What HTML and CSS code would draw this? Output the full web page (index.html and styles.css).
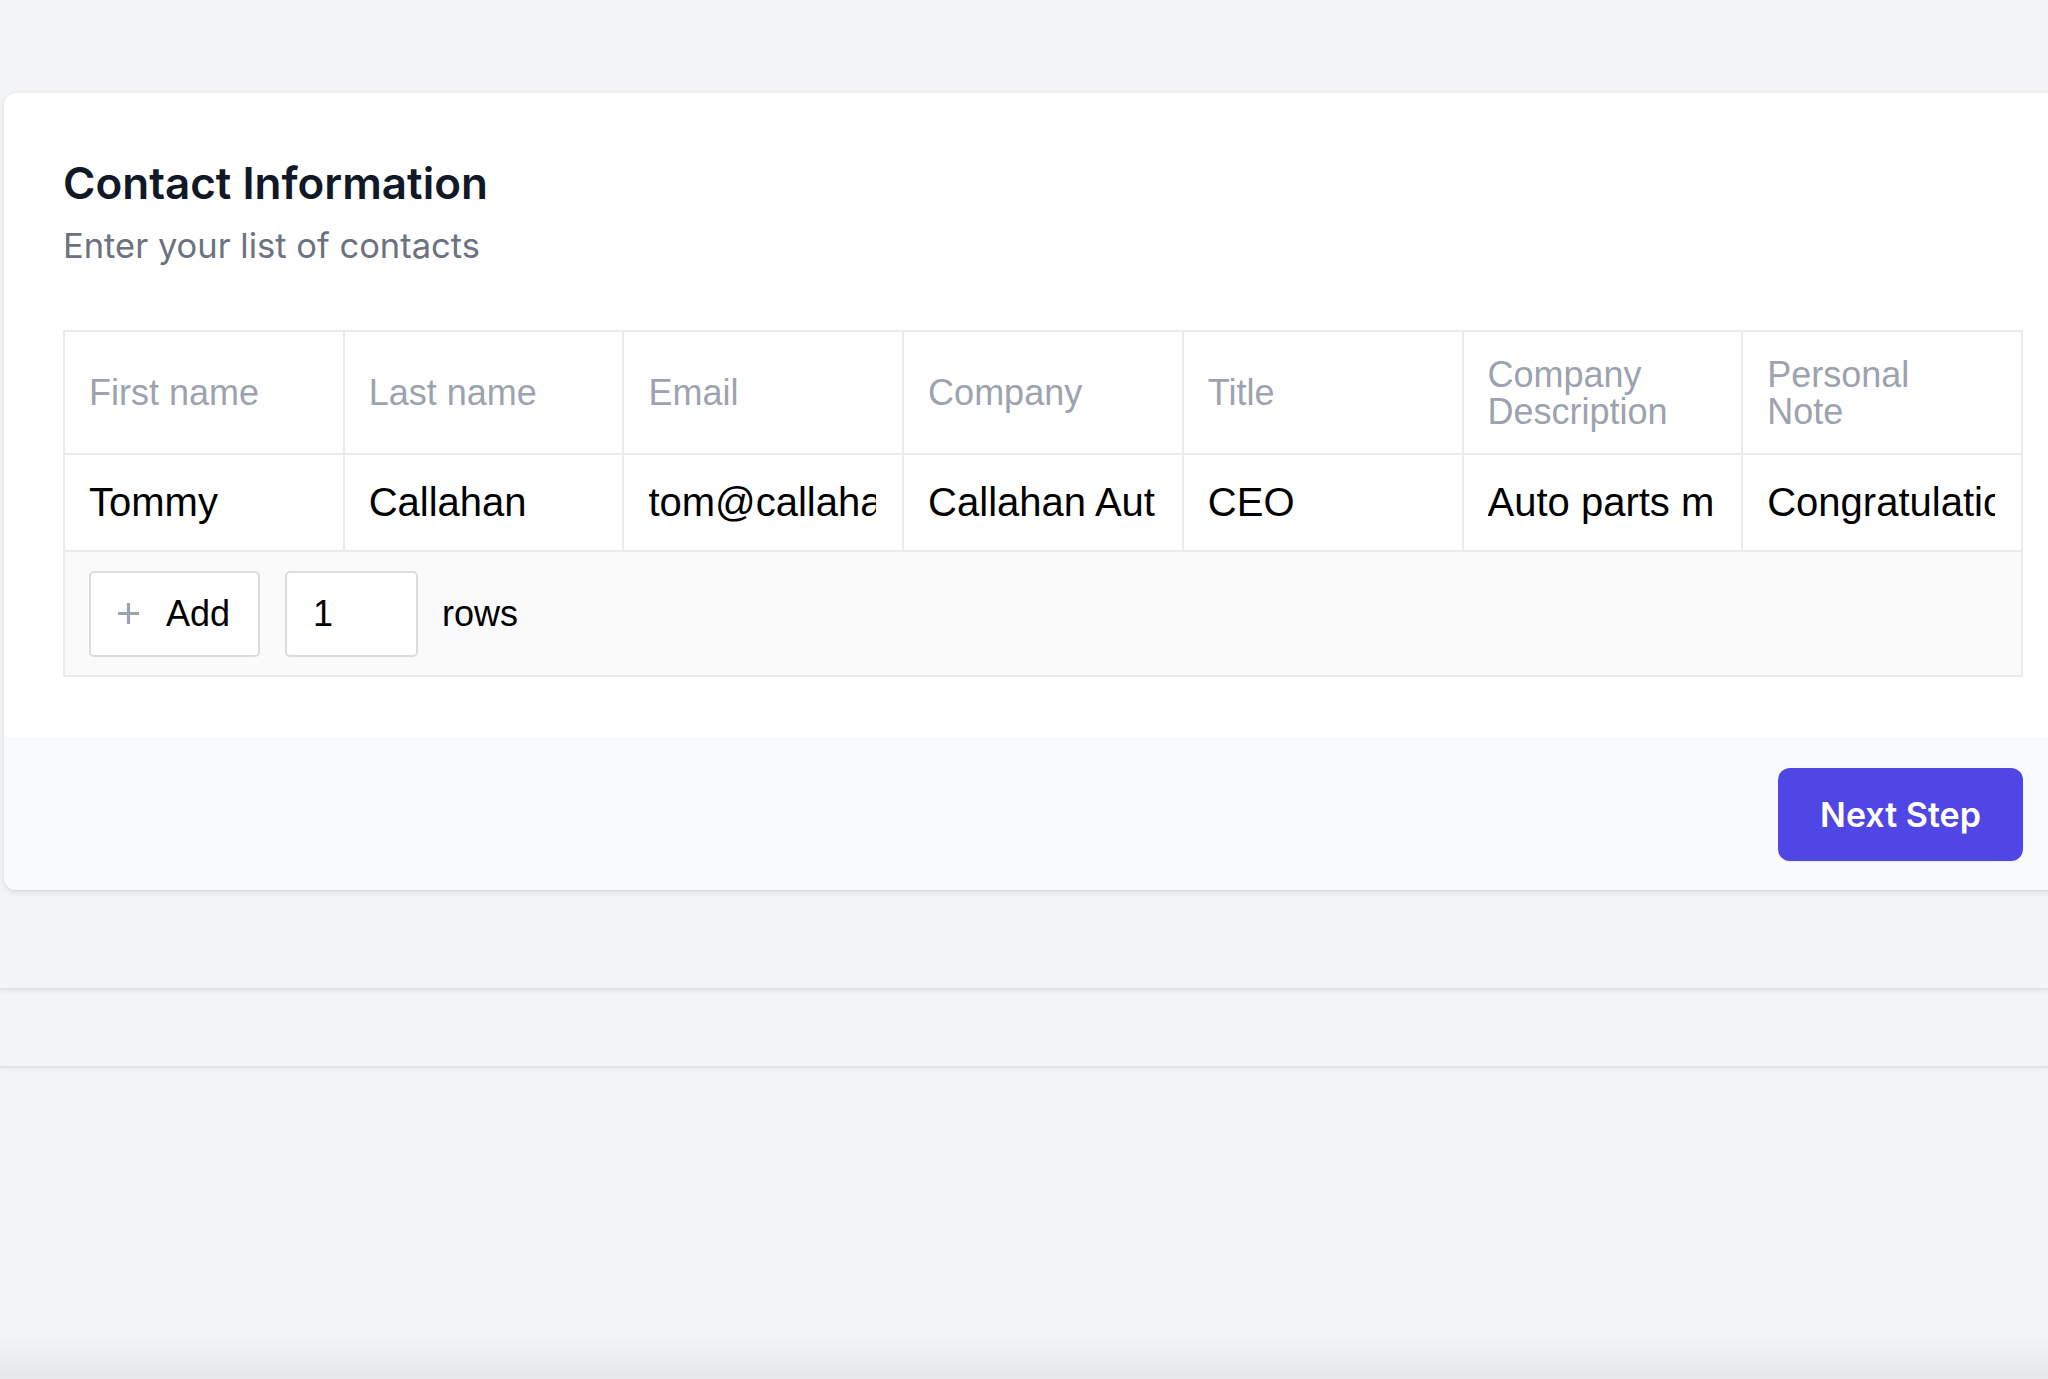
FILE: index.html
```html
<!DOCTYPE html>
<html lang="en">
<head>
    <meta charset="UTF-8">
    <meta name="viewport" content="width=device-width, initial-scale=1.0">
    <title>Contact Information</title>
    <link rel="stylesheet" href="styles.css">
</head>
<body>
    <div class="card">
        <div class="card-body">
            <h2 class="title">Contact Information</h2>
            <p class="subtitle">Enter your list of contacts</p>
            <table class="contacts">
                <thead>
                    <tr>
                        <th>First name</th>
                        <th>Last name</th>
                        <th>Email</th>
                        <th>Company</th>
                        <th>Title</th>
                        <th>Company Description</th>
                        <th>Personal Note</th>
                    </tr>
                </thead>
                <tbody>
                    <tr>
                        <td><input type="text" value="Tommy"></td>
                        <td><input type="text" value="Callahan"></td>
                        <td><input type="text" value="tom@callahanauto.com"></td>
                        <td><input type="text" value="Callahan Auto"></td>
                        <td><input type="text" value="CEO"></td>
                        <td><input type="text" value="Auto parts manufacturer"></td>
                        <td><input type="text" value="Congratulations on the new plant"></td>
                    </tr>
                </tbody>
                <tfoot>
                    <tr>
                        <td colspan="7">
                            <div class="add-row">
                                <button class="add-btn">
                                    <svg width="25" height="25" viewBox="0 0 25 25"><path d="M12.5 2v21M2 12.5h21" stroke="#9ca3af" stroke-width="3.2" fill="none"/></svg>
                                    Add
                                </button>
                                <input type="text" class="count" value="1">
                                <span class="rows">rows</span>
                            </div>
                        </td>
                    </tr>
                </tfoot>
            </table>
        </div>
        <div class="card-footer">
            <button class="next">Next Step</button>
        </div>
    </div>
    <div class="band band-top"></div>
    <div class="band"></div>
    <div class="bottom-fade"></div>
</body>
</html>
```

FILE: styles.css
```css
*{
    margin: 0;
    padding: 0;
    box-sizing: border-box;
}
html, body{
    height: 100%;
}
body{
    background-color: #f3f4f6;
    font-family: Inter, "Liberation Sans", sans-serif;
    overflow: hidden;
    position: relative;
    padding-top: 93px;
}
.card{
    margin-left: 4px;
    width: 2078px;
    background-color: white;
    border-radius: 12px;
    box-shadow: 0 2px 6px rgba(0, 0, 0, 0.09), 0 1px 2px rgba(0, 0, 0, 0.06);
    overflow: hidden;
}
.card-body{
    padding: 58px 59px 60px;
}
.title{
    font-size: 44px;
    line-height: 64px;
    font-weight: 600;
    color: #111827;
}
.subtitle{
    font-size: 34.5px;
    line-height: 50px;
    color: #6b7280;
    margin-top: 6px;
}
.contacts{
    margin-top: 59px;
    width: 1960px;
    table-layout: fixed;
    border-collapse: collapse;
    font-family: "Liberation Sans", Arial, sans-serif;
}
.contacts th, .contacts td{
    border: 2px solid #ebebeb;
}
.contacts th{
    height: 123px;
    padding: 0 30px 0 24px;
    text-align: left;
    font-weight: normal;
    font-size: 36px;
    line-height: 37px;
    color: #9ca3af;
}
.contacts tbody td{
    height: 97px;
}
.contacts tbody input{
    display: block;
    width: 100%;
    height: 95px;
    border: 0;
    outline: 0;
    padding: 0 26px 0 24px;
    font-family: "Liberation Sans", Arial, sans-serif;
    font-size: 40px;
    color: #000;
    background: transparent;
}
.contacts tfoot td{
    height: 125px;
    background-color: #fafafa;
    padding: 0 24px;
}
.add-row{
    display: flex;
    align-items: center;
    font-size: 36px;
    color: #000;
}
.add-btn{
    display: flex;
    align-items: center;
    gap: 25px;
    height: 86px;
    padding: 0 28px 0 25px;
    border: 2px solid #dcdcdc;
    border-radius: 5px;
    background-color: white;
    font-family: "Liberation Sans", Arial, sans-serif;
    font-size: 36px;
    color: #000;
}
.count{
    width: 133px;
    height: 86px;
    margin-left: 25px;
    padding: 0 26px;
    border: 2px solid #dcdcdc;
    border-radius: 5px;
    outline: 0;
    font-family: "Liberation Sans", Arial, sans-serif;
    font-size: 36px;
    color: #000;
}
.rows{
    margin-left: 24px;
}
.card-footer{
    display: flex;
    justify-content: flex-end;
    padding: 31px 59px 29px;
    background-color: #f9fafb;
}
.next{
    height: 93px;
    width: 245px;
    border: 0;
    border-radius: 12px;
    background-color: #4f46e5;
    color: white;
    font-family: Inter, sans-serif;
    font-size: 34px;
    font-weight: 600;
    box-shadow: 0 1px 2px rgba(0, 0, 0, 0.05);
}
.band{
    height: 78px;
    border-bottom: 2px solid #e1e3e7;
    box-shadow: 0 3px 4px rgba(0, 0, 0, 0.03);
}
.band-top{
    height: 100px;
}
.bottom-fade{
    position: absolute;
    left: 0;
    right: 0;
    bottom: 0;
    height: 45px;
    background: linear-gradient(rgba(229, 231, 235, 0), #e5e7eb);
}
```
